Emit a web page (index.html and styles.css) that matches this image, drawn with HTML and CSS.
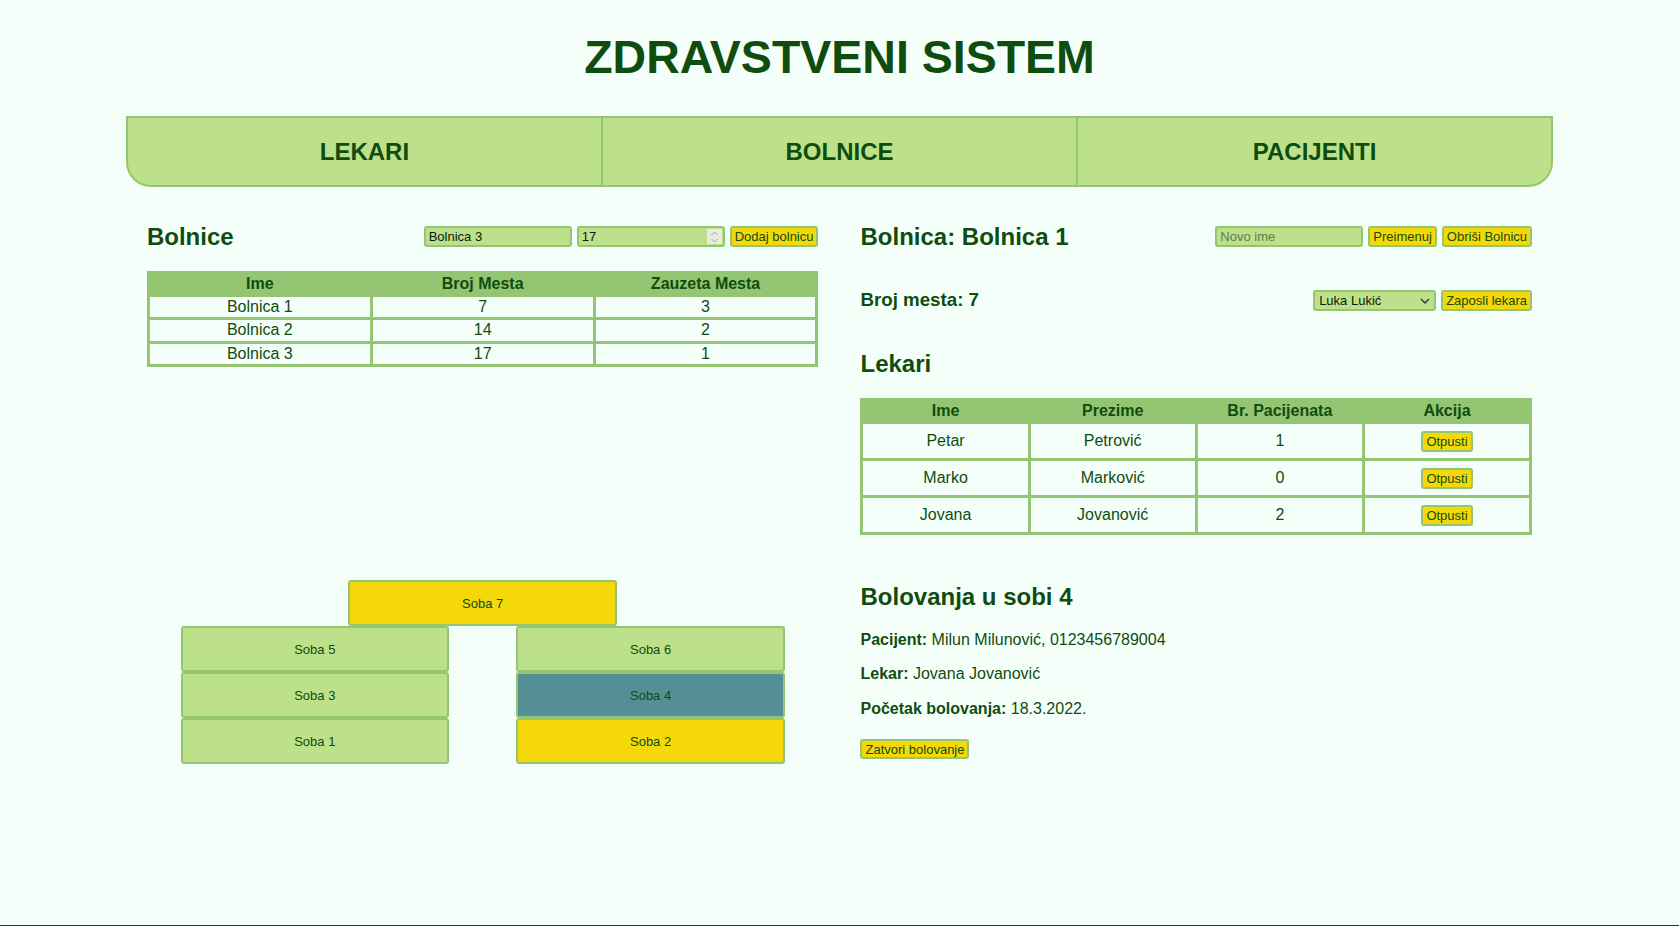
FILE: index.html
```html
<!DOCTYPE html>
<html lang="sr">
<head>
<meta charset="utf-8">
<title>Zdravstveni sistem</title>
<link rel="stylesheet" href="styles.css">
</head>
<body>
<h1 class="title">ZDRAVSTVENI SISTEM</h1>
<nav class="tabs">
  <div class="tab">LEKARI</div>
  <div class="tab">BOLNICE</div>
  <div class="tab">PACIJENTI</div>
</nav>
<main class="content">
  <section class="panel">
    <div class="head-row">
      <h2 class="h2">Bolnice</h2>
      <div class="controls">
        <input class="field" type="text" value="Bolnica 3">
        <span class="num-wrap">
          <input class="field" type="text" value="17">
          <span class="spin">
            <svg width="9" height="14" viewBox="0 0 9 14"><path d="M1.5 5 L4.5 2 L7.5 5" fill="none" stroke="#a0a0a0" stroke-width="1"/><path d="M1.5 9 L4.5 12 L7.5 9" fill="none" stroke="#a0a0a0" stroke-width="1"/></svg>
          </span>
        </span>
        <button class="btn">Dodaj bolnicu</button>
      </div>
    </div>
    <table class="tbl tbl-small">
      <thead><tr><th>Ime</th><th>Broj Mesta</th><th>Zauzeta Mesta</th></tr></thead>
      <tbody>
        <tr><td>Bolnica 1</td><td>7</td><td>3</td></tr>
        <tr><td>Bolnica 2</td><td>14</td><td>2</td></tr>
        <tr><td>Bolnica 3</td><td>17</td><td>1</td></tr>
      </tbody>
    </table>
  </section>
  <section class="panel">
    <div class="head-row">
      <h2 class="h2">Bolnica: Bolnica 1</h2>
      <div class="controls">
        <input class="field" type="text" placeholder="Novo ime">
        <button class="btn">Preimenuj</button>
        <button class="btn">Obriši Bolnicu</button>
      </div>
    </div>
    <div class="head-row">
      <h3 class="h3">Broj mesta: 7</h3>
      <div class="controls">
        <span class="sel-wrap">
          <select class="sel"><option>Luka Lukić</option></select>
          <svg class="chev" width="10" height="6" viewBox="0 0 10 6"><path d="M1 1 L5 5 L9 1" fill="none" stroke="#333" stroke-width="1.3"/></svg>
        </span>
        <button class="btn">Zaposli lekara</button>
      </div>
    </div>
    <h2 class="h2">Lekari</h2>
    <table class="tbl tbl-big">
      <thead><tr><th>Ime</th><th>Prezime</th><th>Br. Pacijenata</th><th>Akcija</th></tr></thead>
      <tbody>
        <tr><td>Petar</td><td>Petrović</td><td>1</td><td><button class="btn">Otpusti</button></td></tr>
        <tr><td>Marko</td><td>Marković</td><td>0</td><td><button class="btn">Otpusti</button></td></tr>
        <tr><td>Jovana</td><td>Jovanović</td><td>2</td><td><button class="btn">Otpusti</button></td></tr>
      </tbody>
    </table>
  </section>
  <section class="panel lower">
    <div class="rooms">
      <div class="room-top"><div class="room yellow">Soba 7</div></div>
      <div class="room-grid">
        <div class="room">Soba 5</div>
        <div class="room">Soba 6</div>
        <div class="room">Soba 3</div>
        <div class="room teal">Soba 4</div>
        <div class="room">Soba 1</div>
        <div class="room yellow">Soba 2</div>
      </div>
    </div>
  </section>
  <section class="panel lower">
    <h2 class="h2">Bolovanja u sobi 4</h2>
    <p class="info"><b>Pacijent:</b> Milun Milunović, 0123456789004</p>
    <p class="info"><b>Lekar:</b> Jovana Jovanović</p>
    <p class="info"><b>Početak bolovanja:</b> 18.3.2022.</p>
    <div class="close-row"><button class="btn">Zatvori bolovanje</button></div>
  </section>
</main>
<div class="bottom-line"></div>
</body>
</html>
```
FILE: styles.css
```css
html, body {
  margin: 0;
  padding: 0;
}
body {
  background: #f5fffa;
  color: #0f4d0f;
  font-family: "Liberation Sans", Arial, sans-serif;
  font-size: 16px;
}
.title {
  margin: 0;
  padding: 30px 0 31px;
  text-align: center;
  font-size: 46.5px;
  line-height: 55px;
  font-weight: bold;
  color: #0f4d0f;
}
.tabs {
  width: 85%;
  margin: 0 auto;
  display: flex;
  height: 71px;
  box-sizing: border-box;
  background: #bde18a;
  border: 2px solid #93c572;
  border-radius: 0 0 25px 25px;
}
.tab {
  flex: 1;
  display: flex;
  align-items: center;
  justify-content: center;
  font-size: 24px;
  font-weight: bold;
  color: #0f4d0f;
}
.tab + .tab {
  border-left: 2px solid #93c572;
}
.content {
  width: 85%;
  margin: 16px auto 0;
  display: grid;
  grid-template-columns: 1fr 1fr;
}
.panel {
  padding: 0 21px;
  min-width: 0;
}
.lower {
  margin-top: 28px;
}
.head-row {
  display: flex;
  align-items: center;
  justify-content: space-between;
}
.h2 {
  font-size: 24px;
  font-weight: bold;
  margin: 20px 0;
  line-height: 27.6px;
}
.h3 {
  font-size: 18.72px;
  font-weight: bold;
  margin: 18.72px 0 19.5px;
  line-height: 21.5px;
}
.controls {
  display: flex;
  align-items: center;
  gap: 5px;
}
.field {
  box-sizing: border-box;
  width: 148px;
  height: 21px;
  padding: 1px 3px;
  border: 2px solid #93c572;
  border-radius: 3px;
  background: #bde18a;
  font-family: "Liberation Sans", Arial, sans-serif;
  font-size: 13px;
  color: #0a1a0a;
  outline: none;
}
.field::placeholder {
  color: #5f7d4f;
}
.num-wrap {
  position: relative;
  display: inline-block;
  line-height: 0;
}
.spin {
  position: absolute;
  right: 3px;
  top: 3px;
  width: 15px;
  height: 15px;
  background: #e9ece6;
  display: flex;
  align-items: center;
  justify-content: center;
}
.btn {
  box-sizing: border-box;
  height: 21px;
  padding: 1px 3px;
  border: 2px solid #93c572;
  border-radius: 3px;
  background: #f5d80a;
  font-family: "Liberation Sans", Arial, sans-serif;
  font-size: 13px;
  color: #0f4d0f;
  line-height: 15px;
  cursor: pointer;
}
.sel-wrap {
  position: relative;
  display: inline-block;
  line-height: 0;
}
.sel {
  -webkit-appearance: none;
  appearance: none;
  box-sizing: border-box;
  width: 123px;
  height: 21px;
  padding: 1px 4px;
  border: 2px solid #93c572;
  border-radius: 3px;
  background: #bde18a;
  font-family: "Liberation Sans", Arial, sans-serif;
  font-size: 13px;
  color: #0a1a0a;
  outline: none;
}
.chev {
  position: absolute;
  right: 6px;
  top: 8px;
  pointer-events: none;
}
.tbl {
  width: 100%;
  border-collapse: collapse;
  table-layout: fixed;
  border: 3px solid #93c572;
  color: #0f4d0f;
}
.tbl th {
  background: #93c572;
  font-weight: bold;
  padding: 1px;
  line-height: 18.4px;
  border: 3px solid #93c572;
}
.tbl td {
  border: 3px solid #93c572;
  text-align: center;
  padding: 1px;
  line-height: 18.4px;
}
.tbl-big td {
  padding: 6.5px 1px;
  height: 20px;
}
.tbl-big td .btn {
  vertical-align: middle;
  padding: 1px 3px;
}
.rooms {
  margin-top: 17px;
}
.room-top {
  display: flex;
  justify-content: center;
}
.room-top .room {
  width: 40%;
}
.room-grid {
  display: grid;
  grid-template-columns: 40% 40%;
  column-gap: 10%;
  justify-content: center;
}
.room {
  box-sizing: border-box;
  height: 46px;
  display: flex;
  align-items: center;
  justify-content: center;
  background: #bde18a;
  border: 2px solid #93c572;
  border-radius: 3px;
  font-size: 13px;
  color: #0f4d0f;
}
.room.yellow {
  background: #f5d80a;
}
.room.teal {
  background: #558f96;
}
.info {
  margin: 16px 0;
  line-height: 18.4px;
}
.close-row {
  margin-top: 21px;
}
.close-row .btn {
  height: 20px;
}
.bottom-line {
  position: fixed;
  left: 0;
  right: 0;
  bottom: 0;
  height: 1px;
  background: #2a3434;
}
```
